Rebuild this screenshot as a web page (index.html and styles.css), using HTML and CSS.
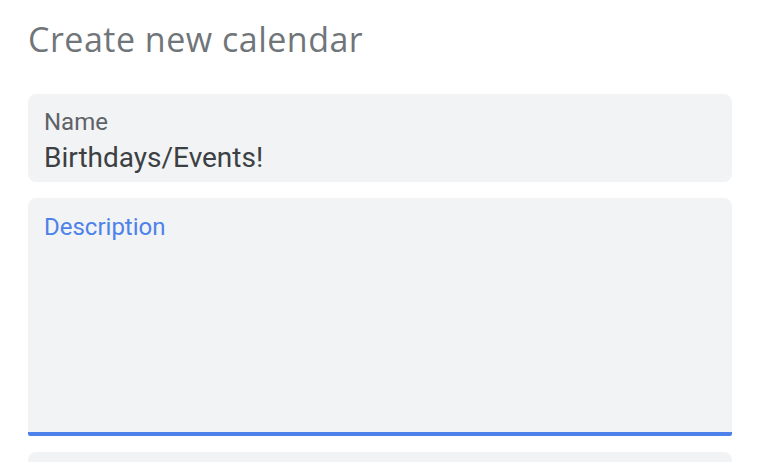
FILE: index.html
```html
<!DOCTYPE html>
<html>
<head>
<meta charset="utf-8">
<link rel="stylesheet" href="styles.css">
</head>
<body>
<div class="page">
  <h1 class="title">Create new calendar</h1>
  <div class="field name">
    <div class="label">Name</div>
    <div class="value">Birthdays/Events!</div>
  </div>
  <div class="field desc">
    <div class="label focus">Description</div>
  </div>
  <div class="field next"></div>
</div>
</body>
</html>
```
FILE: styles.css
```css
html, body { margin: 0; padding: 0; background: #fff; overflow: hidden; }
.page {
  padding: 0 48px 0 28px;
  display: flex;
  flex-direction: column;
  gap: 16px;
  font-family: Roboto, "Liberation Sans", sans-serif;
}
.title {
  margin: 0;
  height: 78px;
  box-sizing: border-box;
  padding-top: 17px;
  font-family: "Open Sans", sans-serif;
  font-weight: 400;
  font-size: 34px;
  line-height: 44px;
  color: #70757a;
  letter-spacing: 0.5px;
}
.field {
  background: #f1f3f4;
  border-radius: 8px;
  padding: 0 16px;
  box-sizing: border-box;
}
.name { height: 88px; padding-top: 14px; }
.label {
  font-size: 24px;
  line-height: 28px;
  color: #5f6368;
}
.value {
  margin-top: 5px;
  font-size: 28px;
  line-height: 34px;
  color: #3c4043;
}
.desc {
  height: 238px;
  padding-top: 15px;
  border-radius: 8px 8px 2px 2px;
  border-bottom: 4px solid #4d82ea;
}
.label.focus { color: #4d82ea; }
.next { height: 10px; border-radius: 8px 8px 0 0; }
```
